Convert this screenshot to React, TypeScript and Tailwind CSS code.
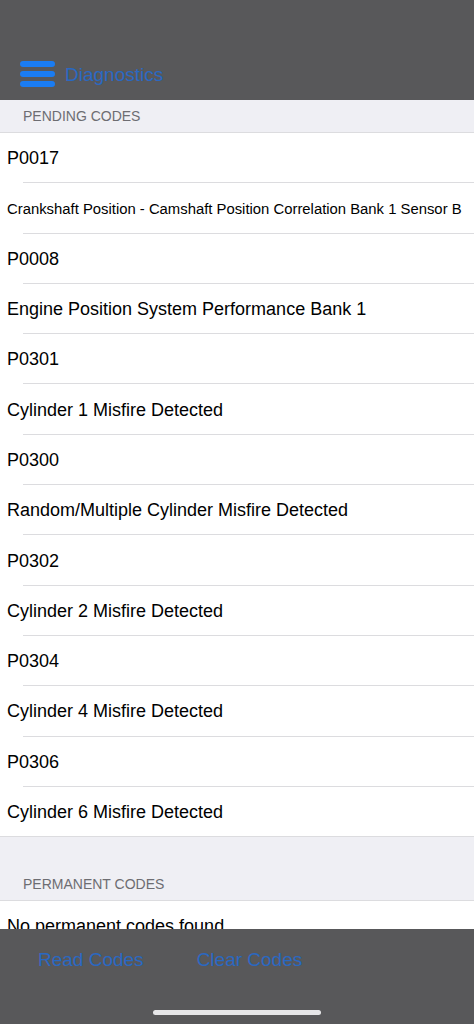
import React from 'react';

const codes: { code: string; desc: string; small?: boolean }[] = [
  { code: 'P0017', desc: 'Crankshaft Position - Camshaft Position Correlation Bank 1 Sensor B', small: true },
  { code: 'P0008', desc: 'Engine Position System Performance Bank 1' },
  { code: 'P0301', desc: 'Cylinder 1 Misfire Detected' },
  { code: 'P0300', desc: 'Random/Multiple Cylinder Misfire Detected' },
  { code: 'P0302', desc: 'Cylinder 2 Misfire Detected' },
  { code: 'P0304', desc: 'Cylinder 4 Misfire Detected' },
  { code: 'P0306', desc: 'Cylinder 6 Misfire Detected' },
];

const Row: React.FC<{ text: string; small?: boolean; last?: boolean }> = ({ text, small, last }) => (
  <div className="relative h-[50.3px] flex items-center pl-[7px] pt-[1px] bg-white">
    <span className={small ? 'text-[14.85px] text-black' : 'text-[18px] text-black'}>{text}</span>
    <div className={`absolute bottom-0 right-0 h-px bg-[#dcdcdf] ${last ? 'left-0' : 'left-[23px]'}`} />
  </div>
);

const App: React.FC = () => {
  const rows = codes.flatMap((c) => [{ text: c.code }, { text: c.desc, small: c.small }]);

  return (
    <div
      className="h-[1024px] w-[474px] flex flex-col overflow-hidden bg-[#efeff4]"
      style={{ fontFamily: '"Liberation Sans", Arial, sans-serif' }}
    >
      <header className="h-[100px] shrink-0 bg-[#58585a] flex items-end pb-[14px] pl-[20px] gap-[10px]">
        <svg width="35" height="26" viewBox="0 0 35 26" className="mb-[-1px]">
          <rect x="0" y="0" width="35" height="6" rx="3" fill="#1a7cf2" />
          <rect x="0" y="10" width="35" height="6" rx="3" fill="#1a7cf2" />
          <rect x="0" y="20" width="35" height="6" rx="3" fill="#1a7cf2" />
        </svg>
        <span className="text-[19px] leading-none text-[#2a68c2] mb-[2px]">Diagnostics</span>
      </header>

      <div className="flex-1 overflow-hidden">
        <div className="h-[33px] flex items-center pl-[23px] border-b border-[#dcdcdf] text-[14px] text-[#6d6d72]">
          PENDING CODES
        </div>
        {rows.map((r, i) => (
          <Row key={i} text={r.text} small={r.small} last={i === rows.length - 1} />
        ))}
        <div className="h-[64px] flex items-end pb-[5px] pl-[23px] border-b border-[#dcdcdf] text-[14px] text-[#6d6d72]">
          PERMANENT CODES
        </div>
        <div className="bg-white h-[50px] flex items-center pl-[7px]">
          <span className="text-[18px] text-black">No permanent codes found</span>
        </div>
      </div>

      <footer className="h-[95px] shrink-0 bg-[#58585a] flex flex-col">
        <div className="flex items-center gap-[53px] pl-[38px] pt-[17px]">
          <span className="text-[19px] text-[#2a68c2]">Read Codes</span>
          <span className="text-[19px] text-[#2a68c2]">Clear Codes</span>
        </div>
        <div className="mt-auto mb-[9px] flex justify-center">
          <div className="w-[168px] h-[5px] rounded-full bg-[#e6e6e8]" />
        </div>
      </footer>
    </div>
  );
};

export default App;
